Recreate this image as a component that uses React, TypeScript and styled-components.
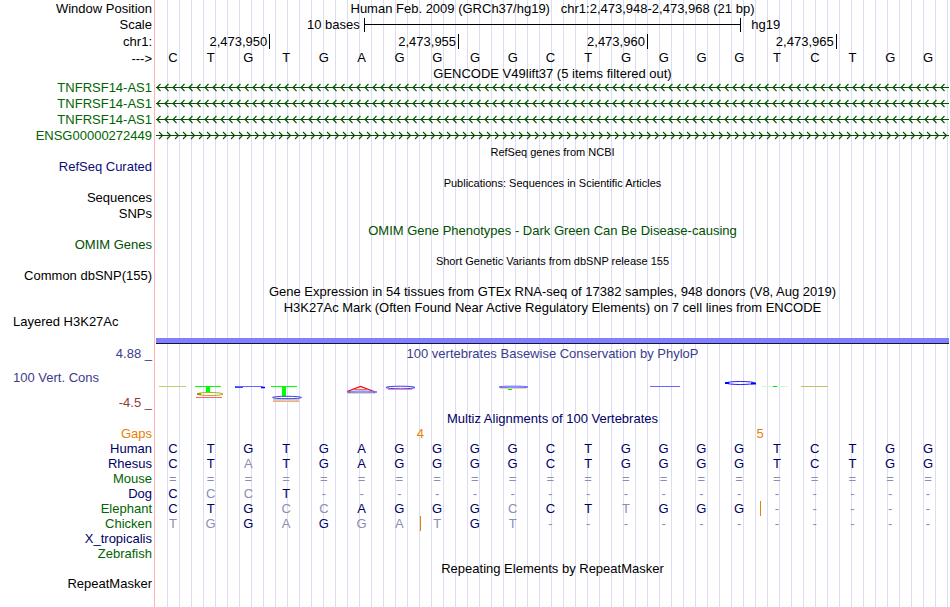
import styled, { createGlobalStyle } from "styled-components";

const HUMAN = "CTGTGAGGGGCTGGGGTCTGG";

const GENES = [
  { id: 1, name: "TNFRSF14-AS1", reverse: true },
  { id: 2, name: "TNFRSF14-AS1", reverse: true },
  { id: 3, name: "TNFRSF14-AS1", reverse: true },
  { id: 4, name: "ENSG00000272449", reverse: false },
];

// insertBefore: index of the base that follows an insertion
const SPECIES = [
  { name: "Human", color: "#000064", bases: HUMAN },
  { name: "Rhesus", color: "#000064", bases: "CTATGAGGGGCTGGGGTCTGG" },
  { name: "Mouse", color: "#006400", bases: "=".repeat(21) },
  { name: "Dog", color: "#000064", bases: "CCCT" + "-".repeat(17) },
  {
    name: "Elephant",
    color: "#006400",
    bases: "CTGCCAGGGCCTTGGG-----",
    insertBefore: 16,
  },
  {
    name: "Chicken",
    color: "#006400",
    bases: "TGGAGGATGT-----------",
    insertBefore: 7,
  },
  { name: "X_tropicalis", color: "#000064", bases: "" },
  { name: "Zebrafish", color: "#006400", bases: "" },
];

function Gene({ id, name, reverse }: (typeof GENES)[number]) {
  return (
    <Row $height={16}>
      <Label $color="#006400">{name}</Label>
      <GeneLine aria-hidden="true">
        <defs>
          <pattern
            id={`arrows-${id}`}
            width="8"
            height="16"
            patternUnits="userSpaceOnUse"
          >
            <path
              d={reverse ? "M4.5 5 L1 8.5 L4.5 12" : "M3 5 L6.5 8.5 L3 12"}
              fill="none"
              stroke="#005000"
              strokeWidth="1.1"
            />
          </pattern>
        </defs>
        <rect width="100%" height="16" fill={`url(#arrows-${id})`} />
        <rect y="8" width="100%" height="1" fill="#005000" />
      </GeneLine>
    </Row>
  );
}

function ConservationLogo() {
  return (
    <Logo viewBox="0 0 793 50" preserveAspectRatio="none" aria-hidden="true">
      <rect x="3" y="25" width="27" height="1" fill="#c8c878" />
      <rect x="39" y="25" width="26" height="1" fill="#00ff00" />
      <rect x="50" y="25" width="4" height="6" fill="#00ff00" />
      <ellipse cx="54" cy="33" rx="13" ry="1.5" fill="none" stroke="#b4aa1e" />
      <path d="M41 33 H45" stroke="#a09600" strokeWidth="2" />
      <rect x="40" y="36" width="26" height="1" fill="#ff6464" />
      <path d="M79 26 H87 M105 26.5 H109" stroke="#0000ff" strokeWidth="1.5" />
      <rect x="80" y="25" width="27" height="1" fill="#6464ff" />
      <rect x="115" y="25" width="26" height="1" fill="#00ff00" />
      <rect x="126" y="25" width="4" height="10" fill="#00ff00" />
      <ellipse cx="130" cy="39" rx="13" ry="1" fill="#e6e6b4" stroke="#c8be64" strokeWidth="0.7" />
      <ellipse cx="131" cy="36.5" rx="14.5" ry="1.2" fill="none" stroke="#3c3cff" />
      <rect x="117" y="40" width="26" height="1" fill="#ffa0a0" />
      <path d="M191 30.5 L204.5 25.5 L218 30.5" stroke="#ff0000" strokeWidth="1.3" fill="none" />
      <rect x="198" y="28" width="13" height="1" fill="#ff6464" />
      <ellipse cx="206" cy="31" rx="15" ry="1" fill="#c8c8ff" stroke="#5050ff" strokeWidth="0.8" />
      <rect x="192" y="32" width="27" height="1" fill="#dcdca0" />
      <ellipse cx="244.5" cy="26.5" rx="14.5" ry="1.3" fill="#f0f0ff" stroke="#3c3cff" />
      <rect x="232" y="28" width="24" height="1" fill="#ff8c8c" />
      <ellipse cx="357.5" cy="26" rx="14.5" ry="0.9" fill="#c8c8ff" stroke="#5050ff" strokeWidth="0.8" />
      <rect x="344" y="27" width="26" height="1" fill="#dcdca0" />
      <rect x="352" y="28" width="4" height="1" fill="#00e600" />
      <rect x="494" y="25" width="30" height="1" fill="#6464ff" />
      <ellipse cx="584.5" cy="22" rx="14" ry="1.5" fill="none" stroke="#1e1eff" />
      <path d="M569 22 H573 M595 22.5 H600" stroke="#0000ff" strokeWidth="2" />
      <rect x="606" y="25" width="26" height="1" fill="#c8ffc8" />
      <rect x="617" y="25" width="4" height="1" fill="#00e600" />
      <rect x="645" y="25" width="27" height="1" fill="#c8be64" />
    </Logo>
  );
}

function Alignment() {
  return (
    <AlignmentTable>
      <colgroup>
        <LabelCol />
        {HUMAN.split("").map((_, i) => (
          <col key={i} />
        ))}
      </colgroup>
      <tbody>
        <tr>
          <Species scope="row" $color="#e68200">
            Gaps
          </Species>
          <td colSpan={6} />
          <GapCount colSpan={2}>4</GapCount>
          <td colSpan={7} />
          <GapCount colSpan={2}>5</GapCount>
          <td colSpan={4} />
        </tr>
        {SPECIES.map(({ name, color, bases, insertBefore }) => (
          <tr key={name}>
            <Species scope="row" $color={color}>
              {name}
            </Species>
            {bases.split("").map((base, i) => (
              <BaseCell
                key={i}
                $match={base === HUMAN[i]}
                $insert={i === insertBefore}
              >
                {base}
              </BaseCell>
            ))}
          </tr>
        ))}
      </tbody>
    </AlignmentTable>
  );
}

function App() {
  return (
    <>
      <GlobalStyle />
      <Browser>
        <Row $height={16}>
          <Label>Window Position</Label>
          <Heading>
            {"Human Feb. 2009 (GRCh37/hg19)   chr1:2,473,948-2,473,968 (21 bp)"}
          </Heading>
        </Row>
        <Row $height={17}>
          <Label>Scale</Label>
          <Scale>
            <ScaleText $right>10 bases</ScaleText>
            <ScaleBar />
            <ScaleText>hg19</ScaleText>
          </Scale>
        </Row>
        <Row $height={17}>
          <Label>chr1:</Label>
          <Ruler>
            <Tick>2,473,950</Tick>
            <Tick>2,473,955</Tick>
            <Tick>2,473,960</Tick>
            <Tick>2,473,965</Tick>
            <Tick />
          </Ruler>
        </Row>
        <Row $height={16}>
          <Label>---&gt;</Label>
          <Bases>
            {HUMAN.split("").map((base, i) => (
              <span key={i}>{base}</span>
            ))}
          </Bases>
        </Row>

        <Row $height={13}>
          <Label />
          <Heading>GENCODE V49lift37 (5 items filtered out)</Heading>
        </Row>
        {GENES.map((gene) => (
          <Gene key={gene.id} {...gene} />
        ))}

        <Row $height={15}>
          <Label />
          <Heading $small $low>
            RefSeq genes from NCBI
          </Heading>
        </Row>
        <Row $height={16}>
          <Label $color="#0c0c78">RefSeq Curated</Label>
        </Row>
        <Row $height={15}>
          <Label />
          <Heading $small $low>
            Publications: Sequences in Scientific Articles
          </Heading>
        </Row>
        <Row $height={16}>
          <Label>Sequences</Label>
        </Row>
        <Row $height={16}>
          <Label>SNPs</Label>
        </Row>
        <Row $height={15}>
          <Label />
          <Heading $color="#005000" $low>
            OMIM Gene Phenotypes - Dark Green Can Be Disease-causing
          </Heading>
        </Row>
        <Row $height={16}>
          <Label $color="#005000">OMIM Genes</Label>
        </Row>
        <Row $height={15}>
          <Label />
          <Heading $small $low>
            Short Genetic Variants from dbSNP release 155
          </Heading>
        </Row>
        <Row $height={16}>
          <Label>Common dbSNP(155)</Label>
        </Row>
        <Row $height={17}>
          <Label />
          <Heading>
            Gene Expression in 54 tissues from GTEx RNA-seq of 17382 samples,
            948 donors (V8, Aug 2019)
          </Heading>
        </Row>
        <Row $height={14}>
          <Label />
          <Heading>
            H3K27Ac Mark (Often Found Near Active Regulatory Elements) on 7 cell
            lines from ENCODE
          </Heading>
        </Row>
        <Row $height={15}>
          <Label $left>Layered H3K27Ac</Label>
        </Row>
        <Row $height={16}>
          <Label />
          <SignalBar />
        </Row>

        <Row $height={16}>
          <Label $color="#3c3c8c">4.88 _</Label>
          <Heading $color="#3c3c8c">
            100 vertebrates Basewise Conservation by PhyloP
          </Heading>
        </Row>
        <Row $height={50}>
          <ConservationLabels>
            <Label $left $color="#3c3c8c">
              100 Vert. Cons
            </Label>
            <Label $color="#8c3c3c">-4.5 _</Label>
          </ConservationLabels>
          <ConservationLogo />
        </Row>

        <Row $height={15}>
          <Label />
          <Heading $color="#000064">
            Multiz Alignments of 100 Vertebrates
          </Heading>
        </Row>
        <Alignment />

        <Row $height={15}>
          <Label />
          <Heading>Repeating Elements by RepeatMasker</Heading>
        </Row>
        <Row $height={15}>
          <Label>RepeatMasker</Label>
        </Row>
      </Browser>
    </>
  );
}

export default App;

const GlobalStyle = createGlobalStyle`
  body {
    margin: 0;
    background: #fff;
    color: #000;
    font-family: "Liberation Sans", Arial, Helvetica, sans-serif;
    font-size: 13px;
    line-height: 15px;
  }
`;

// the guide lines repeat every 12px, hidden behind the label column
const Browser = styled.main`
  margin-right: 1px;
  padding-bottom: 16px;
  background:
    linear-gradient(#ffb4b4, #ffb4b4) 154px 0 / 1px 100% no-repeat,
    linear-gradient(#fff, #fff) 0 0 / 156px 100% no-repeat,
    linear-gradient(to right, transparent 11px, #dcdcf5 11px) 0 0 / 12px 100%;
`;

const Row = styled.div<{ $height: number }>`
  display: grid;
  grid-template-columns: 156px minmax(0, 1fr);
  align-items: center;
  height: ${({ $height }) => $height}px;
`;

const Label = styled.div<{ $color?: string; $left?: boolean }>`
  padding: 0 4px 0 13px;
  color: ${({ $color }) => $color ?? "inherit"};
  text-align: ${({ $left }) => ($left ? "left" : "right")};
  white-space: nowrap;
`;

const Heading = styled.div<{
  $color?: string;
  $small?: boolean;
  $low?: boolean;
}>`
  padding-top: ${({ $low }) => ($low ? 2 : 0)}px;
  color: ${({ $color }) => $color ?? "inherit"};
  font-size: ${({ $small }) => ($small ? 11 : 13)}px;
  text-align: center;
  white-space: pre;
`;

const Scale = styled.div`
  display: grid;
  grid-template-columns: 11fr 20fr 11fr;
  align-items: center;
`;

const ScaleText = styled.span<{ $right?: boolean }>`
  padding: ${({ $right }) => ($right ? "0 4px 0 0" : "0 0 0 10px")};
  text-align: ${({ $right }) => ($right ? "right" : "left")};
`;

const ScaleBar = styled.div`
  height: 14px;
  border: solid #000;
  border-width: 0 1px;
  background: linear-gradient(#000, #000) 0 6px / 100% 1px no-repeat;
`;

const Ruler = styled.div`
  display: grid;
  grid-template-columns: 3fr 5fr 5fr 5fr 3fr;
`;

const Tick = styled.span`
  height: 15px;
  padding-right: 2px;
  text-align: right;

  & + & {
    border-left: 1px solid #000;
  }
`;

const Bases = styled.div`
  display: grid;
  grid-template-columns: repeat(21, minmax(0, 1fr));
  padding-bottom: 2px;
  text-align: center;

  span {
    padding-right: 4px;
  }
`;

const GeneLine = styled.svg`
  display: block;
  width: 100%;
  height: 16px;
`;

const SignalBar = styled.div`
  align-self: end;
  height: 5px;
  margin-bottom: 1px;
  border-bottom: 1px solid #14143c;
  background: #8080ff;
`;

const ConservationLabels = styled.div`
  display: flex;
  flex-direction: column;
  gap: 10px;
  padding-top: 8px;
`;

const Logo = styled.svg`
  display: block;
  width: 100%;
  height: 50px;
`;

const AlignmentTable = styled.table`
  width: 100%;
  table-layout: fixed;
  border-spacing: 0;

  td,
  th {
    height: 15px;
    padding: 0;
  }
`;

const LabelCol = styled.col`
  width: 156px;
`;

const Species = styled.th<{ $color: string }>`
  && {
    padding-right: 4px;
  }
  color: ${({ $color }) => $color};
  font-weight: normal;
  text-align: right;
`;

const GapCount = styled.td`
  color: #e68200;
  text-align: center;
`;

const BaseCell = styled.td<{ $match: boolean; $insert: boolean }>`
  && {
    padding-right: 4px;
  }
  color: ${({ $match }) => ($match ? "#000064" : "#8c8cb4")};
  box-shadow: ${({ $insert }) => ($insert ? "inset 1px 0 #e68200" : "none")};
  text-align: center;
`;
